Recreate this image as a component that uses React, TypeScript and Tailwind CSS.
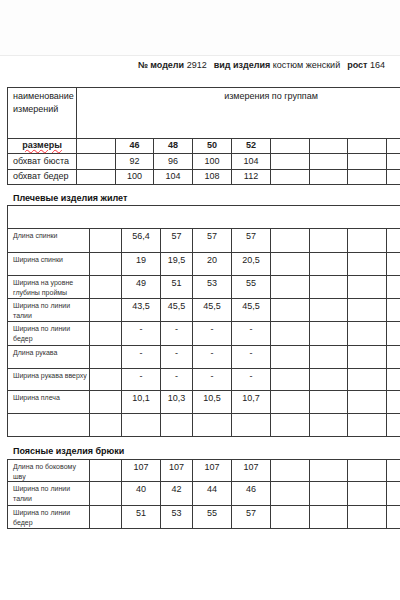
import React from 'react';

const font = { fontFamily: '"Liberation Sans", Arial, sans-serif' };

const t1Cols = 'grid-cols-[69px_39px_38px_39px_39px_39px_39px_38px_39px_78px]';
const t2Cols = 'grid-cols-[82px_32px_39px_32px_39px_39px_39px_38px_39px_78px]';

const cell = 'border-r border-b border-[#3a3a3a]';

type Row = { label: string; values: string[]; h: string };

const vestRows: Row[] = [
  { label: 'Длина спинки', values: ['56,4', '57', '57', '57'], h: 'h-[24px]' },
  { label: 'Ширина спинки', values: ['19', '19,5', '20', '20,5'], h: 'h-[23px]' },
  { label: 'Ширина на уровне глубины проймы', values: ['49', '51', '53', '55'], h: 'h-[23px]' },
  { label: 'Ширина по линии талии', values: ['43,5', '45,5', '45,5', '45,5'], h: 'h-[23px]' },
  { label: 'Ширина по линии бедер', values: ['-', '-', '-', '-'], h: 'h-[24px]' },
  { label: 'Длина рукава', values: ['-', '-', '-', '-'], h: 'h-[23px]' },
  { label: 'Ширина рукава вверху', values: ['-', '-', '-', '-'], h: 'h-[22px]' },
  { label: 'Ширина плеча', values: ['10,1', '10,3', '10,5', '10,7'], h: 'h-[23px]' },
  { label: '', values: ['', '', '', ''], h: 'h-[23px]' },
];

const pantsRows: Row[] = [
  { label: 'Длина по боковому шву', values: ['107', '107', '107', '107'], h: 'h-[22px]' },
  { label: 'Ширина по линии талии', values: ['40', '42', '44', '46'], h: 'h-[24px]' },
  { label: 'Ширина по линии бедер', values: ['51', '53', '55', '57'], h: 'h-[23px]' },
];

const SmallRow: React.FC<{ row: Row }> = ({ row }) => (
  <>
    <div className={`${cell} ${row.h} pl-[5px] pr-[2px] pt-[2px] text-[7px] leading-[10px] text-[#333]`}>
      {row.label}
    </div>
    <div className={`${cell} ${row.h}`} />
    {row.values.map((v, i) => (
      <div key={i} className={`${cell} ${row.h} text-center text-[9px] leading-[12px] pt-[1px] text-[#222]`}>
        {v}
      </div>
    ))}
    <div className={`${cell} ${row.h}`} />
    <div className={`${cell} ${row.h}`} />
    <div className={`${cell} ${row.h}`} />
    <div className={`${cell} ${row.h} border-r-0`} />
  </>
);

const SizeRow: React.FC<{ label: string; values: string[]; bold?: boolean; h: string }> = ({ label, values, bold, h }) => (
  <>
    <div
      className={`${cell} ${h} flex items-center text-[9px] ${
        bold ? 'justify-center font-bold' : 'pl-[5px]'
      } text-[#222]`}
    >
      {bold ? <span className="underline decoration-wavy decoration-red-500 decoration-[0.5px]">{label}</span> : label}
    </div>
    <div className={`${cell} ${h}`} />
    {values.map((v, i) => (
      <div key={i} className={`${cell} ${h} flex items-center justify-center text-[9px] text-[#222] ${bold ? 'font-bold' : ''}`}>
        {v}
      </div>
    ))}
    <div className={`${cell} ${h}`} />
    <div className={`${cell} ${h}`} />
    <div className={`${cell} ${h}`} />
    <div className={`${cell} ${h} border-r-0`} />
  </>
);

export default function App() {
  return (
    <div className="w-[400px] h-[600px] bg-white overflow-hidden" style={font}>
      <div className="h-[56px] border-b border-[#ececec] bg-[#fdfdfd]" />

      <div className="flex justify-end pr-[15px] pt-[3px] text-[9px] leading-[12px] text-[#222] gap-[7px]">
        <span>
          <b>№ модели</b> 2912
        </span>
        <span>
          <b>вид изделия</b> костюм женский
        </span>
        <span>
          <b>рост</b> 164
        </span>
      </div>

      <div className="mt-[16px] ml-[7px] w-[393px] overflow-hidden">
        <div className={`grid ${t1Cols} w-[490px] border-l border-t border-[#3a3a3a]`}>
          <div className={`${cell} h-[51px] pl-[5px] pt-[2px] text-[9px] leading-[13px] text-[#222]`}>
            наименование измерений
          </div>
          <div className={`${cell} col-span-9 h-[51px] border-r-0 text-center pt-[2px] text-[9px] leading-[13px] text-[#222]`}>
            измерения по группам
          </div>
          <SizeRow label="размеры" values={['46', '48', '50', '52']} bold h="h-[15px]" />
          <SizeRow label="обхват бюста" values={['92', '96', '100', '104']} h="h-[16px]" />
          <SizeRow label="обхват бедер" values={['100', '104', '108', '112']} h="h-[15px]" />
        </div>
      </div>

      <div className="pl-[13px] mt-[7px] text-[9px] leading-[12px] font-bold text-[#111]">Плечевые изделия жилет</div>

      <div className="mt-[1px] ml-[7px] w-[393px] overflow-hidden">
        <div className={`grid ${t2Cols} w-[490px] border-l border-t border-[#3a3a3a]`}>
          <div className={`${cell} col-span-10 h-[23px] border-r-0`} />
          {vestRows.map((r, i) => (
            <SmallRow key={i} row={r} />
          ))}
        </div>
      </div>

      <div className="pl-[13px] mt-[8px] text-[9px] leading-[12px] font-bold text-[#111]">Поясные изделия брюки</div>

      <div className="mt-[2px] ml-[7px] w-[393px] overflow-hidden">
        <div className={`grid ${t2Cols} w-[490px] border-l border-t border-[#3a3a3a]`}>
          {pantsRows.map((r, i) => (
            <SmallRow key={i} row={r} />
          ))}
        </div>
      </div>
    </div>
  );
}
